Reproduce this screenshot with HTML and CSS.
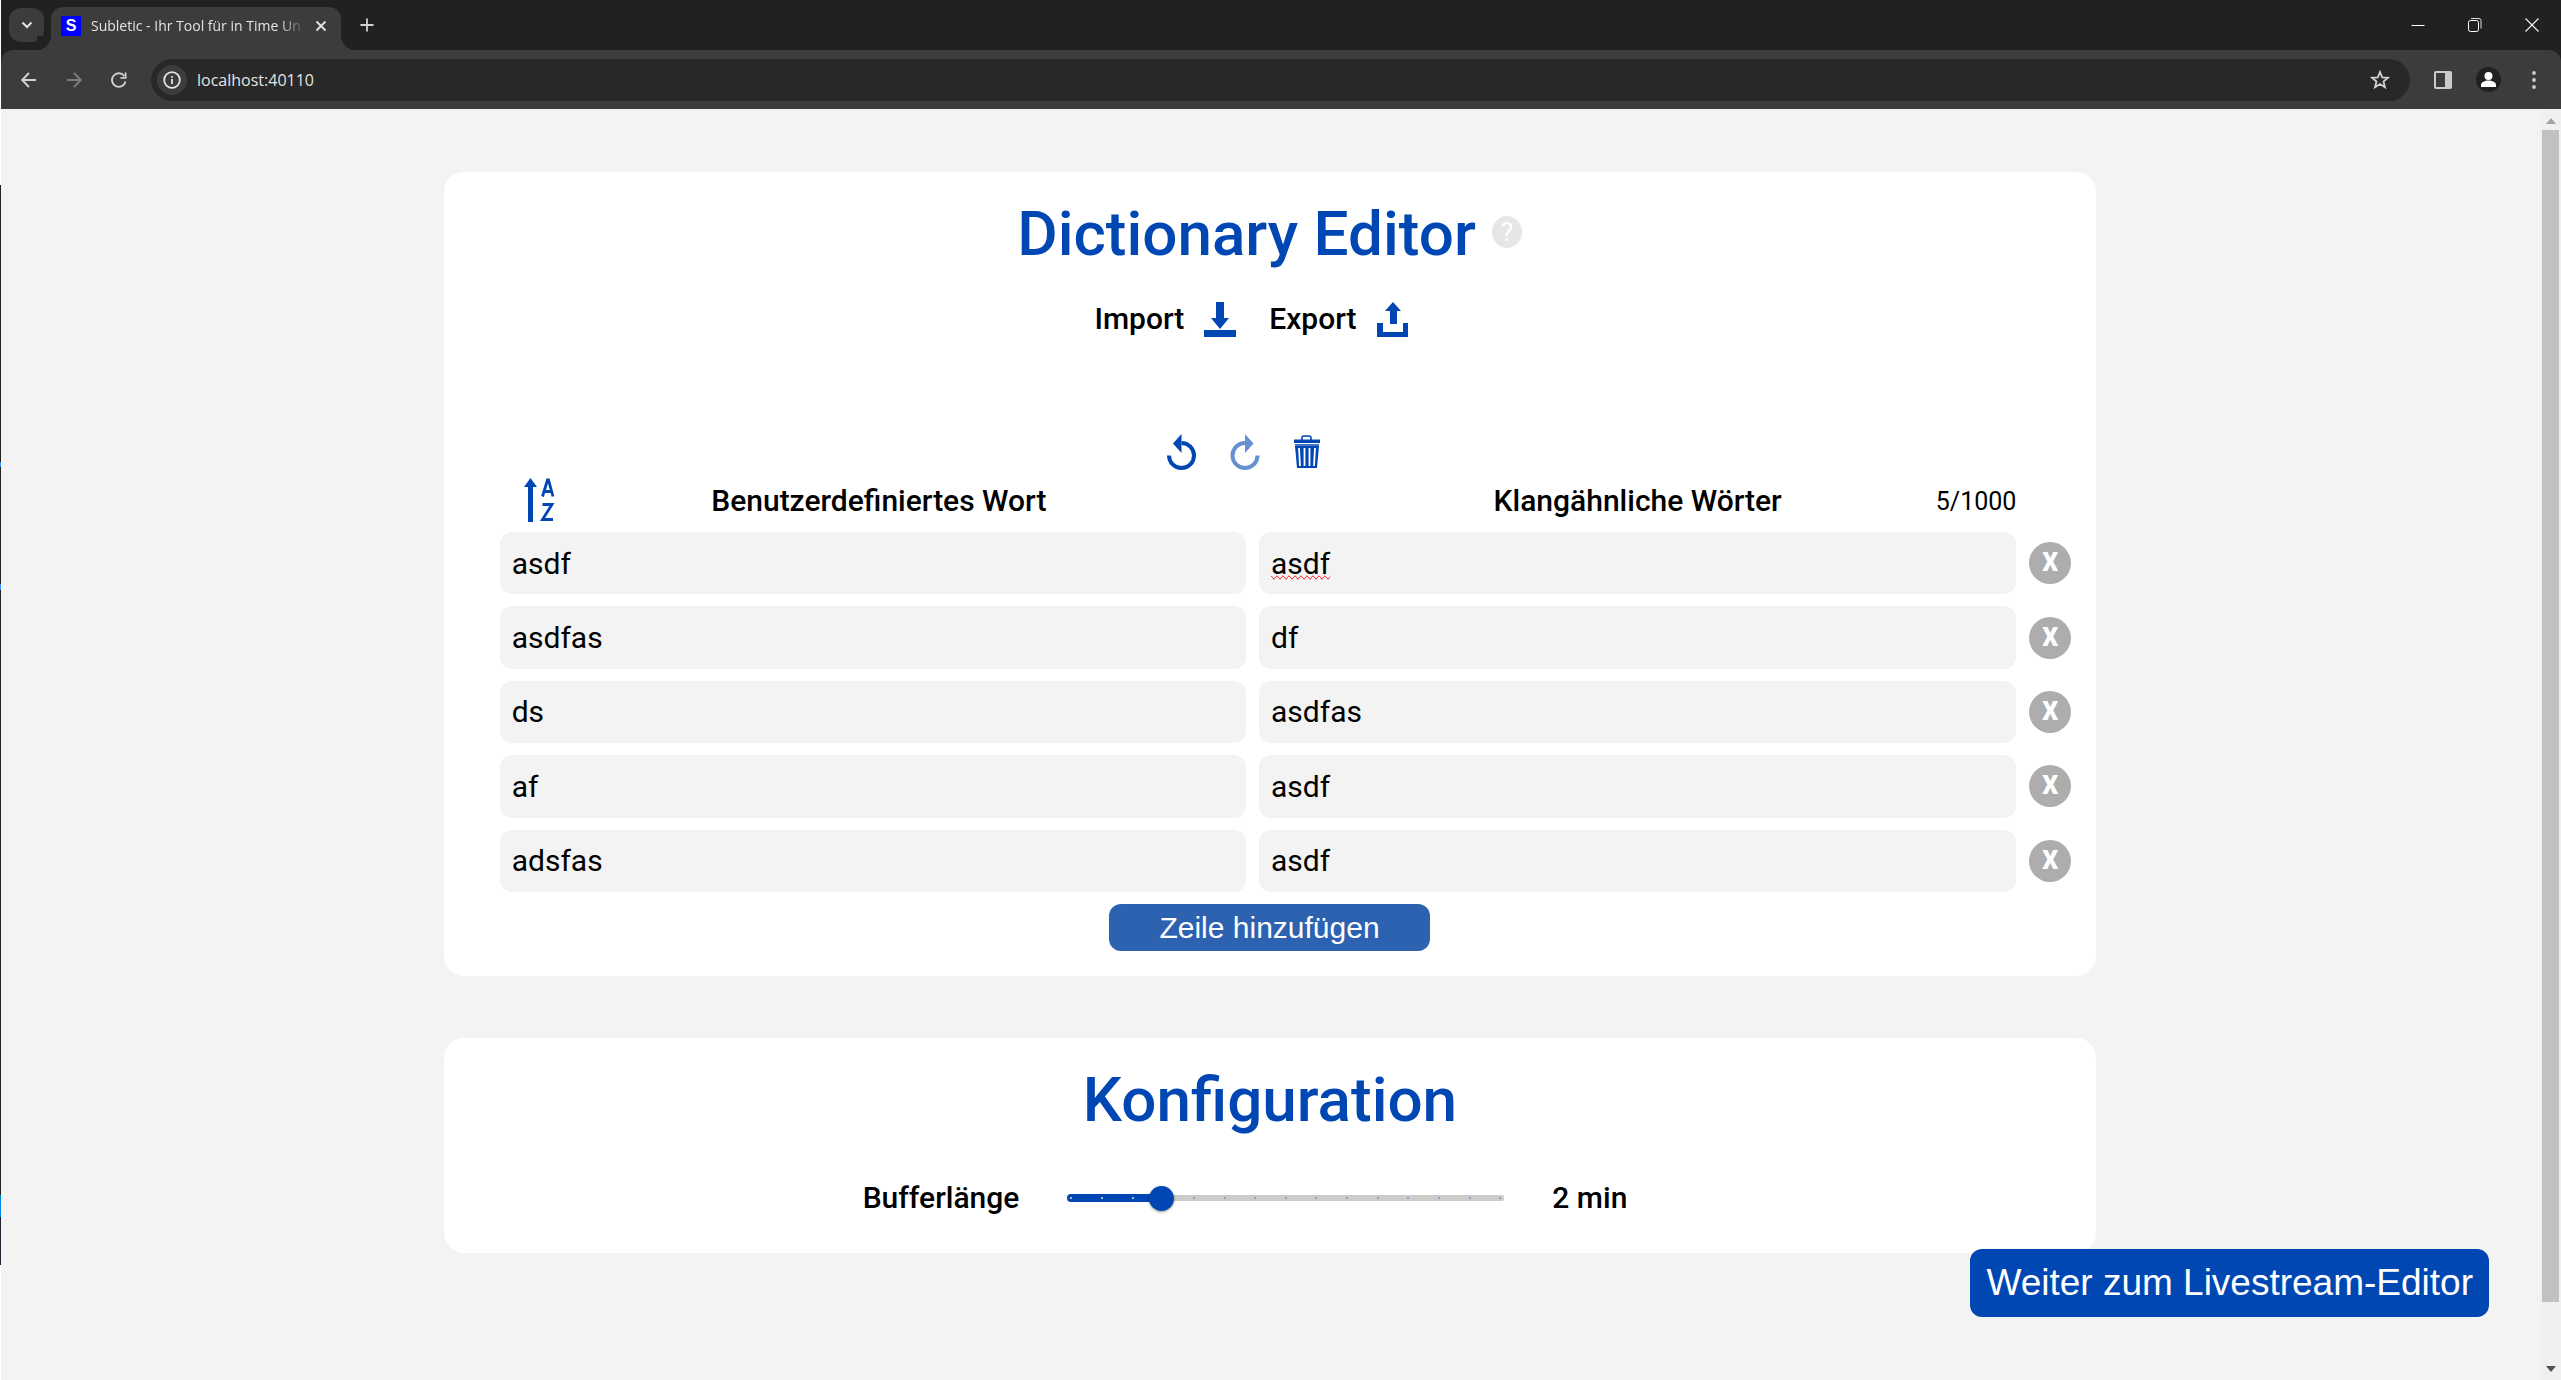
FILE: index.html
```html
<!DOCTYPE html>
<html lang="de">
<head>
<meta charset="utf-8">
<title>Subletic - Ihr Tool für in Time Untertitelung</title>
<link rel="stylesheet" href="styles.css">
</head>
<body>
<header class="browser">
  <div class="tab-strip">
    <button class="tab-search" aria-label="Tabs durchsuchen"><svg width="12" height="8" viewBox="0 0 12 8"><path d="M1.500 1.500 6 6l4.500-4.500" fill="none" stroke="#e3e3e3" stroke-width="2"/></svg></button>
    <div class="tab">
      <span class="favicon">S</span>
      <span class="tab-title">Subletic - Ihr Tool für in Time Un</span>
      <button class="plain" aria-label="Tab schließen"><svg width="12" height="12" viewBox="0 0 12 12"><path d="M1.500 1.500l9 9M10.500 1.500l-9 9" stroke="#e3e3e3" stroke-width="1.800"/></svg></button>
    </div>
    <button class="plain new-tab" aria-label="Neuer Tab"><svg width="14" height="14" viewBox="0 0 14 14"><path d="M7 .5v13M.5 7h13" stroke="#d0d0d0" stroke-width="1.800"/></svg></button>
    <div class="window-controls">
      <button class="plain" aria-label="Minimieren"><svg width="14" height="14" viewBox="0 0 14 14"><path d="M.5 7.500h13" stroke="#fff"/></svg></button>
      <button class="plain" aria-label="Verkleinern"><svg width="14" height="14" viewBox="0 0 14 14"><rect x=".5" y="2.500" width="10" height="11" rx="2" fill="none" stroke="#fff"/><path d="M3 .5h8a2 2 0 0 1 2 2v8" fill="none" stroke="#ddd"/></svg></button>
      <button class="plain" aria-label="Schließen"><svg width="14" height="14" viewBox="0 0 14 14"><path d="M.5.5l13 13M13.500.5l-13 13" stroke="#eee" stroke-width="1.200"/></svg></button>
    </div>
  </div>
  <div class="toolbar">
    <nav class="nav">
      <button class="plain" aria-label="Zurück"><svg width="16" height="16" viewBox="0 0 16 16"><path d="M15 8H1.500M8 1 1.200 8 8 15" fill="none" stroke="#d0d0d0" stroke-width="1.900"/></svg></button>
      <button class="plain" aria-label="Vorwärts"><svg width="16" height="16" viewBox="0 0 16 16"><path d="M1 8h13.500M8 1l6.800 7L8 15" fill="none" stroke="#7c7c7c" stroke-width="1.900"/></svg></button>
      <button class="plain" aria-label="Neu laden"><svg width="16" height="16" viewBox="0 0 16 16"><path d="M14.500 9.500A6.800 6.800 0 1 1 13.300 4" fill="none" stroke="#d0d0d0" stroke-width="1.900"/><path d="M15.500.5v6.300H9.500V5h4.200V.5z" fill="#d0d0d0"/></svg></button>
    </nav>
    <div class="omnibox">
      <button class="site-info" aria-label="Website-Informationen"><svg width="18" height="18" viewBox="0 0 18 18"><circle cx="9" cy="9" r="7.800" fill="none" stroke="#e3e3e3" stroke-width="1.800"/><path d="M9 8v5M9 5v1.800" stroke="#e3e3e3" stroke-width="1.800"/></svg></button>
      <input class="url" aria-label="Adresse" value="localhost:40110" spellcheck="false">
      <button class="plain" aria-label="Lesezeichen"><svg width="20" height="20" viewBox="0 0 20 20"><path d="M10 2l2.200 5.400 5.800.4-4.500 3.700 1.500 5.800-5-3.200-5 3.200 1.500-5.800L2 7.800l5.800-.4z" fill="none" stroke="#d0d0d0" stroke-width="1.800"/></svg></button>
    </div>
    <div class="actions">
      <button class="plain" aria-label="Seitenleiste"><svg width="18" height="18" viewBox="0 0 18 18"><rect x="1" y="1" width="16" height="16" rx="1" fill="none" stroke="#ccc" stroke-width="2"/><path d="M11 1h6v16h-6z" fill="#ccc"/></svg></button>
      <button class="plain" aria-label="Profil"><svg width="25" height="25" viewBox="0 0 25 25"><circle cx="12.500" cy="12.500" r="12.500" fill="#1f2121"/><circle cx="12.500" cy="9" r="4" fill="#fff"/><path d="M5 20v-2c0-3 4-4.500 7.500-4.500S20 15 20 18v2z" fill="#fff"/></svg></button>
      <button class="plain" aria-label="Menü"><svg width="6" height="18" viewBox="0 0 6 18"><g fill="#ccc"><circle cx="3" cy="2" r="1.900"/><circle cx="3" cy="9" r="1.900"/><circle cx="3" cy="16" r="1.900"/></g></svg></button>
    </div>
  </div>
</header>

<div class="viewport">
  <main class="page">
    <section class="card dictionary">
      <div class="title-row">
        <h1>Dictionary Editor</h1>
        <button class="help" aria-label="Hilfe">?</button>
      </div>
      <div class="transfer">
        <button class="transfer-button">Import
          <svg width="32" height="35" viewBox="0 0 32 35"><path d="M12 0h8v16h5L16 27 7 16h5zM0 28h32v7H0z" fill="#0047b3"/></svg></button>
        <button class="transfer-button">Export
          <svg width="32" height="35" viewBox="0 0 32 35"><path d="M16 0l8 9h-4v13h-7V9H8zM0 21h6v9h20v-9h5v14H0z" fill="#0047b3"/></svg></button>
      </div>
      <div class="tools">
        <button class="plain" aria-label="Rückgängig"><svg width="30" height="36" viewBox="0 0 30 36"><path d="M2 21.500A12.500 12.500 0 1 0 14.500 9" fill="none" stroke="#0047b3" stroke-width="4"/><path d="M14.500 0v19L6 9.500z" fill="#0047b3"/></svg></button>
        <button class="plain" aria-label="Wiederholen" disabled><svg width="30" height="36" viewBox="0 0 30 36"><path d="M27.500 21.500A12.500 12.500 0 1 1 15 9" fill="none" stroke="#6691d1" stroke-width="4"/><path d="M15 0v19l8.500-9.500z" fill="#6691d1"/></svg></button>
        <button class="plain" aria-label="Alles löschen"><svg width="28" height="34" viewBox="0 0 28 34"><path d="M9 5V3q0-2 2-2h5q2 0 2 2v2" fill="none" stroke="#0047b3" stroke-width="1.600"/><path d="M1 4.500h26V8H1z" fill="#0047b3"/><path d="M2 9h24v2H2z" fill="#0047b3" opacity=".75"/><path d="M2 11h24l-2 22H4z" fill="#0047b3"/><path d="M6 13l1 18M11.500 13v18M16.500 13v18M22 13l-1 18" stroke="#fff" stroke-width="1.800"/></svg></button>
      </div>
      <div class="columns">
        <button class="plain sort" aria-label="Sortieren"><svg width="31" height="45" viewBox="0 0 31 45"><path d="M6.500 0L13 9H9v35H4V9H0z" fill="#0047b3"/><path d="M18.500 18.500l5-16.500h1L29 18.500M20 13.500h8M18.500 26.500H28L18.500 41.500H29" fill="none" stroke="#0047b3" stroke-width="2.800"/></svg></button>
        <h2 class="column-word">Benutzerdefiniertes Wort</h2>
        <h2 class="column-sounds">Klangähnliche Wörter</h2>
        <span class="count">5/1000</span>
      </div>
      <div class="rows">
        <div class="row"><input aria-label="Wort 1" value="asdf"><div class="field" contenteditable="true" role="textbox" aria-label="Klangähnlich 1" spellcheck="false"><span class="misspelled">asdf</span></div><button class="remove" aria-label="Zeile 1 entfernen">X</button></div>
        <div class="row"><input aria-label="Wort 2" value="asdfas"><input aria-label="Klangähnlich 2" value="df"><button class="remove" aria-label="Zeile 2 entfernen">X</button></div>
        <div class="row"><input aria-label="Wort 3" value="ds"><input aria-label="Klangähnlich 3" value="asdfas"><button class="remove" aria-label="Zeile 3 entfernen">X</button></div>
        <div class="row"><input aria-label="Wort 4" value="af"><input aria-label="Klangähnlich 4" value="asdf"><button class="remove" aria-label="Zeile 4 entfernen">X</button></div>
        <div class="row"><input aria-label="Wort 5" value="adsfas"><input aria-label="Klangähnlich 5" value="asdf"><button class="remove" aria-label="Zeile 5 entfernen">X</button></div>
      </div>
      <button class="add-row">Zeile hinzufügen</button>
    </section>

    <section class="card configuration">
      <h1>Konfiguration</h1>
      <div class="buffer">
        <label for="buffer">Bufferlänge</label>
        <div class="track">
          <i></i><i></i><i></i><i></i><i></i><i></i><i></i><i></i><i></i><i></i><i></i><i></i><i></i><i></i><i></i>
          <input class="slider" id="buffer" type="range" min="0.5" max="7.5" step="0.5" value="2">
        </div>
        <output for="buffer">2 min</output>
      </div>
    </section>
  </main>
  <div class="scrollbar" aria-hidden="true">
    <svg width="10" height="6" viewBox="0 0 10 6"><path d="M0 6l5-6 5 6z" fill="#a3a3a3"/></svg>
    <div class="scroll-thumb"></div>
    <svg width="10" height="6" viewBox="0 0 10 6"><path d="M0 0h10L5 6z" fill="#505050"/></svg>
  </div>
</div>
<button class="continue">Weiter zum Livestream-Editor</button>
</body>
</html>
```
FILE: styles.css
```css
* { box-sizing: border-box; }

body {
  margin: 0;
  min-height: 100vh;
  display: flex;
  flex-direction: column;
  /* One-pixel window edge with the desktop showing through */
  padding-left: 1px;
  background:
    linear-gradient(#fff 185px, #222 185px 462px, #3390ff 462px 467px, #222 467px 584px, #3390ff 584px 590px,
      #222 590px 1195px, #0088e0 1195px 1217px, #223 1217px 1265px, #fff 1265px) 0 0 / 1px 100% no-repeat,
    #f3f3f3;
  color: #000;
  font-family: Roboto, sans-serif;
}

button, input { font: inherit; color: inherit; margin: 0; border: 0; }
button { padding: 0; cursor: pointer; }
svg { display: block; flex: none; }
h1, h2 { margin: 0; font-weight: 500; }

.plain { display: flex; background: none; }

/* Browser window */
.browser { background: #202222; color: #e3e3e3; font-family: "Open Sans", sans-serif; }
.tab-strip { display: flex; align-items: center; height: 50px; padding-left: 8px; }
.tab-search {
  display: flex; align-items: center; justify-content: center;
  width: 35px; height: 34px; border-radius: 12px; background: #3c3c3c;
}
.tab {
  position: relative;
  display: flex; align-items: center; gap: 10px;
  align-self: flex-end;
  width: 290px; height: 43px; margin-left: 7px; padding: 0 14px 6px 10px;
  border-radius: 12px 12px 0 0; background: #3c3c3c;
}
.tab::before, .tab::after {
  content: ""; position: absolute; bottom: 0; width: 14px; height: 14px;
}
.tab::before { right: 100%; background: radial-gradient(circle at 0 0, #202222 14px, #3c3c3c 14px); }
.tab::after { left: 100%; background: radial-gradient(circle at 100% 0, #202222 14px, #3c3c3c 14px); }
.favicon {
  flex: none; width: 20px; height: 20px; background: #00f; color: #fff;
  font: 700 16px/20px "Liberation Sans", sans-serif; text-align: center;
}
.tab-title {
  flex: 1; overflow: hidden; white-space: nowrap; font-size: 14px;
  mask-image: linear-gradient(to right, #000 88%, transparent);
}
.new-tab { margin-left: 19px; }
.window-controls { display: flex; gap: 43px; margin-left: auto; padding-right: 22px; }

.toolbar {
  display: flex; align-items: center; gap: 24px;
  height: 59px; padding: 0 24px 0 20px;
  border-radius: 12px 12px 0 0; background: #3c3c3c;
}
.nav { display: flex; gap: 29px; }
.omnibox {
  flex: 1; display: flex; align-items: center; gap: 10px;
  height: 42px; padding: 0 20px 0 6px; border-radius: 21px; background: #282828;
}
.site-info {
  display: flex; align-items: center; justify-content: center;
  width: 30px; height: 30px; border-radius: 50%; background: #3c3c3c;
}
.url { flex: 1; padding: 0; background: none; font-size: 16px; outline: 0; }
.actions { display: flex; align-items: center; gap: 24px; }
.actions .plain:last-child { margin-left: 6px; }

/* Page */
.viewport { flex: 1; display: flex; }
.page {
  flex: 1; display: flex; flex-direction: column; align-items: center; gap: 62px;
  padding: 63px 1px 80px 0;
}
.card { width: calc(65% + 3px); border-radius: 20px; background: #fff; }
.card h1 { font-size: 62px; line-height: 76px; color: #0047b3; }

.dictionary { display: flex; flex-direction: column; padding: 24px 25px 25px 56px; }
.title-row { display: flex; align-items: center; justify-content: center; gap: 16px; padding-right: 32px; }
.help {
  width: 30px; height: 32px; margin-bottom: 4px; border-radius: 50%; background: #e6e6e6;
  color: #fff; font-size: 26px; line-height: 32px;
}
.transfer { display: flex; justify-content: center; gap: 33px; margin-top: 29px; padding-right: 68px; }
.transfer-button {
  display: flex; align-items: center; gap: 20px;
  background: none; font-size: 30px; font-weight: 500; line-height: 36px;
}
.tools { display: flex; align-items: center; justify-content: center; gap: 33px; margin-top: 97px; padding-right: 84px; }

.columns, .row { display: grid; grid-template-columns: 746fr 757fr 42px; column-gap: 13px; align-items: center; }
.columns { height: 45px; margin: 8px 0 9px; }
.columns > * { grid-row: 1; }
.columns h2 { text-align: center; font-size: 30px; line-height: 36px; }
.columns .column-word { grid-column: 1; padding-left: 12px; }
.column-sounds { grid-column: 2; }
.sort { grid-column: 1; justify-self: start; margin-left: 24px; }
.count { grid-column: 2; justify-self: end; padding-top: 2px; font-size: 25px; }

.rows { display: grid; grid-auto-rows: 1fr; gap: 12px; min-height: 360px; }
.row input, .field {
  width: 100%; height: 100%; min-width: 0; padding: 0 12px;
  border-radius: 12px; background: #f3f3f3; font-size: 30px; outline: 0;
}
.field { display: flex; align-items: center; }
.misspelled { text-decoration-line: spelling-error; }
.remove {
  width: 42px; height: 42px; border-radius: 50%; background: #adadad;
  color: #fff; font-size: 25px; font-weight: 900; line-height: 42px;
}
.add-row {
  align-self: center; width: 321px; height: 47px; margin: 12px 32px 0 0;
  border-radius: 12px; background: #2d62b0; color: #fff;
  font-family: "Liberation Sans", Arial, sans-serif; font-size: 30px;
}

.configuration { padding: 24px 0 37px; text-align: center; }
.buffer {
  display: flex; align-items: center; justify-content: center;
  margin-top: 42px; padding-right: 50px;
  font-size: 30px; font-weight: 500; line-height: 36px;
}
.track {
  position: relative;
  display: flex; align-items: center; justify-content: space-between;
  width: 437px; height: 8px; margin: 0 48px; padding: 0 3px; border-radius: 4px;
  background:
    linear-gradient(#0047b3, #0047b3) 0 0 / 21% 8px no-repeat,
    linear-gradient(#ccc, #ccc) 0 50% / 100% 6px no-repeat;
}
.track i { width: 2px; height: 2px; border-radius: 50%; background: #7f8ad0; }
.track i:nth-child(-n+3) { background: #d6e0f5; }
.slider {
  position: absolute; left: -12px; top: -9px;
  appearance: none; width: calc(100% + 24px); height: 26px; background: none; outline: 0;
}
.slider::-webkit-slider-thumb {
  appearance: none; width: 25px; height: 25px; border-radius: 50%;
  background: #0047b3; box-shadow: 0 1px 3px #0006;
}

.continue {
  position: fixed; right: 72px; bottom: 63px;
  padding: 0 16px; height: 68px; border-radius: 12px;
  background: #0047b3; color: #fff;
  font-family: "Liberation Sans", Arial, sans-serif; font-size: 37px;
}

.scrollbar {
  display: flex; flex-direction: column; align-items: center; gap: 6px;
  width: 21px; padding: 9px 0 8px; background: #f0f0f0;
}
.scroll-thumb { flex: none; width: 17px; height: 93.5%; background: #c1c1c1; }
.scrollbar svg:last-child { margin-top: auto; }
```
